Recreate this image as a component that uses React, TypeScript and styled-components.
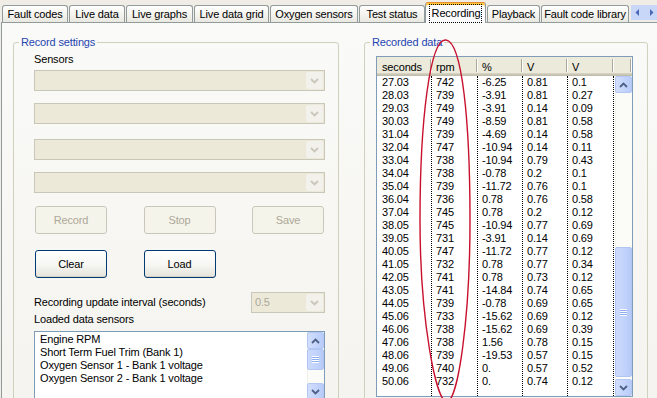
import React from "react";
import styled, { createGlobalStyle, css } from "styled-components";

const GlobalStyle = createGlobalStyle`
  html, body { margin: 0; padding: 0; }
  body {
    background: #EFEDE5;
    font-family: "Liberation Sans", Arial, sans-serif;
    font-size: 11px;
    letter-spacing: -0.15px;
    color: #000;
  }
  #root { width: 657px; height: 398px; }
`;

const Window = styled.div`
  position: relative;
  width: 657px;
  height: 398px;
  overflow: hidden;
  display: flex;
  flex-direction: column;
`;

/* ---------- tabs ---------- */
const TabStrip = styled.div`
  display: flex;
  align-items: flex-end;
  gap: 1px;
  height: 22px;
  padding-left: 2px;
  position: relative;
  z-index: 2;
  flex: none;
`;

const Tab = styled.div<{ $w: number; $active?: boolean }>`
  box-sizing: border-box;
  flex: none;
  width: ${(p) => p.$w}px;
  height: 17px;
  border: 1px solid #919B9C;
  border-bottom: none;
  border-radius: 3px 3px 0 0;
  background: linear-gradient(#FFFFFF, #F4F3EE 55%, #E8E7E0);
  display: flex;
  align-items: center;
  justify-content: center;
  white-space: nowrap;
  line-height: 13px;
  ${(p) =>
    p.$active &&
    css`
      height: 21px;
      margin: 0 0 -1px -1px;
      background: #FCFCFE;
      border-top: 1px solid #E68B2C;
      box-shadow: inset 0 2px #FFC83C;
      padding-top: 1px;
    `}
`;

const FocusLabel = styled.span`
  outline: 1px dotted #000;
  outline-offset: 0;
  padding: 2px 1px 2px 2px;
`;

const TabScroller = styled.div`
  flex: none;
  display: flex;
  width: 27px;
  height: 15px;
  margin-bottom: 2px;
  margin-left: 1px;
  background: #C8D6F8;
`;

const ScrollerButton = styled.div`
  flex: 1;
  display: flex;
  align-items: center;
  justify-content: center;
`;

/* ---------- panel ---------- */
const Panel = styled.div`
  flex: 1;
  display: flex;
  align-items: flex-start;
  gap: 25px;
  margin-left: 1px;
  border-top: 1px solid #919B9C;
  border-left: 1px solid #919B9C;
  background: linear-gradient(#FAFAF8, #F4F3EE);
  padding: 13px 0 0 11px;
`;

const GroupBox = styled.fieldset<{ $w: number }>`
  box-sizing: border-box;
  flex: none;
  width: ${(p) => p.$w}px;
  height: 420px;
  min-width: 0;
  margin: 0;
  padding: 0;
  border: 1px solid #D0D0BF;
  border-radius: 3px;
`;

const Legend = styled.legend`
  margin-left: 5px;
  padding: 0 2px;
  color: #1F45B0;
  font-size: 11px;
  line-height: 13px;
`;

const SettingsBody = styled.div`
  display: flex;
  flex-direction: column;
  padding: 4px 13px 0 20px;
`;

const Label = styled.div<{ $mt?: number }>`
  line-height: 13px;
  margin-top: ${(p) => p.$mt ?? 0}px;
  white-space: nowrap;
`;

const Combo = styled.div<{ $mt?: number; $w?: number }>`
  box-sizing: border-box;
  display: flex;
  height: 21px;
  width: ${(p) => (p.$w ? `${p.$w}px` : "100%")};
  margin-top: ${(p) => p.$mt ?? 0}px;
  border: 1px solid #C9C7BA;
  background: #ECE9D9;
  flex: none;
`;

const ComboText = styled.div`
  flex: 1;
  color: #ACA899;
  line-height: 19px;
  padding-left: 3px;
`;

const ComboButton = styled.div`
  width: 17px;
  flex: none;
  margin: 1px;
  border-radius: 2px;
  background: #F2F1EB;
  display: flex;
  align-items: center;
  justify-content: center;
`;

const ButtonGrid = styled.div<{ $mt: number }>`
  display: grid;
  grid-template-columns: repeat(3, 72px);
  justify-content: space-between;
  padding: 0 1px;
  margin-top: ${(p) => p.$mt}px;
`;

const Button = styled.div<{ $disabled?: boolean }>`
  box-sizing: border-box;
  height: 28px;
  border-radius: 3px;
  display: flex;
  align-items: center;
  justify-content: center;
  ${(p) =>
    p.$disabled
      ? css`
          border: 1px solid #C9C7BA;
          background: #F5F4EA;
          color: #ACA899;
        `
      : css`
          border: 1px solid #003C74;
          background: linear-gradient(#FFFFFF 0%, #F6F6F2 55%, #E4E3DB 100%);
          box-shadow: inset 0 -1px #D6D0C5;
          color: #000;
        `}
`;

const IntervalRow = styled.div`
  display: flex;
  align-items: center;
  justify-content: space-between;
  margin-top: 14px;
`;

const ListBox = styled.div`
  box-sizing: border-box;
  display: flex;
  height: 70px;
  margin-top: 5px;
  border: 1px solid #7F9DB9;
  background: #FFFFFF;
`;

const ListItems = styled.div`
  flex: 1;
  padding: 1px 0 0 5px;
  line-height: 13px;
  white-space: nowrap;
`;

/* ---------- scrollbars ---------- */
const VScroll = styled.div`
  width: 17px;
  flex: none;
  display: flex;
  flex-direction: column;
  background: #FBFBF8;
  box-shadow: inset 1px 0 #F1EFE6;
`;

const ScrollButton = styled.div`
  box-sizing: border-box;
  height: 17px;
  flex: none;
  border: 1px solid #B4C8F4;
  border-radius: 2px;
  background: linear-gradient(90deg, #D2DEFC, #C2D3FB 60%, #B8CCF9);
  display: flex;
  align-items: center;
  justify-content: center;
`;

const Track = styled.div`
  flex: 1;
  display: flex;
  flex-direction: column;
`;

const Thumb = styled.div<{ $top: number; $h: number }>`
  box-sizing: border-box;
  margin-top: ${(p) => p.$top}px;
  height: ${(p) => p.$h}px;
  border: 1px solid #B1C5F3;
  border-radius: 2px;
  background: linear-gradient(90deg, #CCDAFC, #C1D2FB 60%, #B6CAF8);
  display: flex;
  align-items: center;
  justify-content: center;
`;

const Grip = styled.div`
  width: 7px;
  height: 7px;
  background: repeating-linear-gradient(#FFFFFF 0 1px, #8EAEF0 1px 2px);
`;

/* ---------- list view ---------- */
const ListView = styled.div`
  box-sizing: border-box;
  width: 257px;
  height: 341px;
  margin: 7px 0 0 11px;
  border: 1px solid #7F9DB9;
  background: #FFFFFF;
  display: flex;
  flex-direction: column;
`;

const HeaderRow = styled.div`
  display: flex;
  height: 19px;
  flex: none;
  background: #EBEADB;
  box-shadow: inset 0 -1px #C1BDAB, inset 0 -2px #CBC7B8, inset 0 -3px #D6D2C2;
`;

const HeaderCell = styled.div<{ $w?: number; $pad: number }>`
  position: relative;
  box-sizing: border-box;
  width: ${(p) => (p.$w ? `${p.$w}px` : "auto")};
  flex: ${(p) => (p.$w ? "none" : "1")};
  padding: 4px 0 0 ${(p) => p.$pad}px;
  line-height: 13px;
  &::after {
    content: "";
    position: absolute;
    right: 1px;
    top: 2px;
    width: 1px;
    height: 13px;
    background: #ACA899;
    box-shadow: 1px 0 #FFFFFF;
  }
`;

const ListBody = styled.div`
  flex: 1;
  display: flex;
  min-height: 0;
`;

const Columns = styled.div`
  flex: 1;
  display: flex;
`;

const Column = styled.div<{ $w: number; $pad: number }>`
  box-sizing: border-box;
  width: ${(p) => p.$w}px;
  flex: none;
  border-right: 1px dotted #000;
  padding-left: ${(p) => p.$pad}px;
  line-height: 13px;
  white-space: nowrap;
`;

const Annotation = styled.svg`
  position: absolute;
  left: 0;
  top: 0;
  pointer-events: none;
  z-index: 5;
`;

/* ---------- icons ---------- */
const Chevron = ({ dir, color }: { dir: "up" | "down"; color: string }) => (
  <svg width="9" height="6" viewBox="0 0 9 6">
    <polyline
      points={dir === "up" ? "1,5 4.5,1.5 8,5" : "1,1 4.5,4.5 8,1"}
      fill="none"
      stroke={color}
      strokeWidth="1.8"
    />
  </svg>
);

const ScrollBar = ({ top, h }: { top: number; h: number }) => (
  <VScroll>
    <ScrollButton>
      <Chevron dir="up" color="#4D6185" />
    </ScrollButton>
    <Track>
      <Thumb $top={top} $h={h}>
        <Grip />
      </Thumb>
    </Track>
    <ScrollButton>
      <Chevron dir="down" color="#4D6185" />
    </ScrollButton>
  </VScroll>
);

const DisabledCombo = ({ mt, w, text }: { mt?: number; w?: number; text?: string }) => (
  <Combo $mt={mt} $w={w}>
    <ComboText>{text}</ComboText>
    <ComboButton>
      <Chevron dir="down" color="#C9C7BA" />
    </ComboButton>
  </Combo>
);

/* ---------- data ---------- */
const tabs = [
  { label: "Fault codes", w: 66 },
  { label: "Live data", w: 56 },
  { label: "Live graphs", w: 67 },
  { label: "Live data grid", w: 75 },
  { label: "Oxygen sensors", w: 88 },
  { label: "Test status", w: 66 },
  { label: "Recording", w: 61, active: true },
  { label: "Playback", w: 53 },
  { label: "Fault code library", w: 88 },
];

const rows: string[][] = [
  ["27.03", "742", "-6.25", "0.81", "0.1"],
  ["28.03", "739", "-3.91", "0.81", "0.27"],
  ["29.03", "749", "-3.91", "0.14", "0.09"],
  ["30.03", "749", "-8.59", "0.81", "0.58"],
  ["31.04", "739", "-4.69", "0.14", "0.58"],
  ["32.04", "747", "-10.94", "0.14", "0.11"],
  ["33.04", "738", "-10.94", "0.79", "0.43"],
  ["34.04", "738", "-0.78", "0.2", "0.1"],
  ["35.04", "739", "-11.72", "0.76", "0.1"],
  ["36.04", "736", "0.78", "0.76", "0.58"],
  ["37.04", "745", "0.78", "0.2", "0.12"],
  ["38.05", "745", "-10.94", "0.77", "0.69"],
  ["39.05", "731", "-3.91", "0.14", "0.69"],
  ["40.05", "747", "-11.72", "0.77", "0.12"],
  ["41.05", "732", "0.78", "0.77", "0.34"],
  ["42.05", "741", "0.78", "0.73", "0.12"],
  ["43.05", "741", "-14.84", "0.74", "0.65"],
  ["44.05", "739", "-0.78", "0.69", "0.65"],
  ["45.06", "733", "-15.62", "0.69", "0.12"],
  ["46.06", "738", "-15.62", "0.69", "0.39"],
  ["47.06", "738", "1.56", "0.78", "0.15"],
  ["48.06", "739", "-19.53", "0.57", "0.15"],
  ["49.06", "740", "0.", "0.57", "0.52"],
  ["50.06", "732", "0.", "0.74", "0.12"],
];

const columns = [
  { title: "seconds", w: 55, pad: 5 },
  { title: "rpm", w: 46, pad: 4 },
  { title: "%", w: 45, pad: 4 },
  { title: "V", w: 45, pad: 4 },
  { title: "V", w: 46, pad: 4 },
];

const sensors = [
  "Engine RPM",
  "Short Term Fuel Trim (Bank 1)",
  "Oxygen Sensor 1 - Bank 1 voltage",
  "Oxygen Sensor 2 - Bank 1 voltage",
];

export default function App() {
  return (
    <>
      <GlobalStyle />
      <Window>
        <TabStrip>
          {tabs.map((t) => (
            <Tab key={t.label} $w={t.w} $active={t.active}>
              {t.active ? <FocusLabel>{t.label}</FocusLabel> : t.label}
            </Tab>
          ))}
          <TabScroller>
            <ScrollerButton>
              <svg width="5" height="7" viewBox="0 0 5 7">
                <polygon points="4,0 0.5,3.5 4,7" fill="#4A68B8" />
              </svg>
            </ScrollerButton>
            <ScrollerButton>
              <svg width="5" height="7" viewBox="0 0 5 7">
                <polygon points="1,0 4.5,3.5 1,7" fill="#4A68B8" />
              </svg>
            </ScrollerButton>
          </TabScroller>
        </TabStrip>

        <Panel>
          <GroupBox $w={326}>
            <Legend>Record settings</Legend>
            <SettingsBody>
              <Label>Sensors</Label>
              <DisabledCombo mt={4} />
              <DisabledCombo mt={12} />
              <DisabledCombo mt={15} />
              <DisabledCombo mt={12} />
              <ButtonGrid $mt={13}>
                <Button $disabled>Record</Button>
                <Button $disabled>Stop</Button>
                <Button $disabled>Save</Button>
              </ButtonGrid>
              <ButtonGrid $mt={16}>
                <Button>Clear</Button>
                <Button>Load</Button>
              </ButtonGrid>
              <IntervalRow>
                <Label>Recording update interval (seconds)</Label>
                <DisabledCombo w={74} text="0.5" />
              </IntervalRow>
              <Label>Loaded data sensors</Label>
              <ListBox>
                <ListItems>
                  {sensors.map((s) => (
                    <div key={s}>{s}</div>
                  ))}
                </ListItems>
                <ScrollBar top={0} h={21} />
              </ListBox>
            </SettingsBody>
          </GroupBox>

          <GroupBox $w={284}>
            <Legend>Recorded data</Legend>
            <ListView>
              <HeaderRow>
                {columns.map((c, i) => (
                  <HeaderCell key={i} $w={c.w} $pad={c.pad}>
                    {c.title}
                  </HeaderCell>
                ))}
                <HeaderCell $pad={0} />
              </HeaderRow>
              <ListBody>
                <Columns>
                  {columns.map((c, ci) => (
                    <Column key={ci} $w={c.w} $pad={c.pad}>
                      {rows.map((r, ri) => (
                        <div key={ri}>{r[ci]}</div>
                      ))}
                    </Column>
                  ))}
                </Columns>
                <ScrollBar top={154} h={130} />
              </ListBody>
            </ListView>
          </GroupBox>
        </Panel>

        <Annotation width="657" height="398" viewBox="0 0 657 398">
          <path
            d="M446,40 C462,42 470,120 470,220 C470,320 458,400 447,402 C436,402 420,320 420,220 C420,120 430,38 446,40 Z"
            fill="none"
            stroke="#C8102E"
            strokeWidth="1.4"
          />
        </Annotation>
      </Window>
    </>
  );
}
